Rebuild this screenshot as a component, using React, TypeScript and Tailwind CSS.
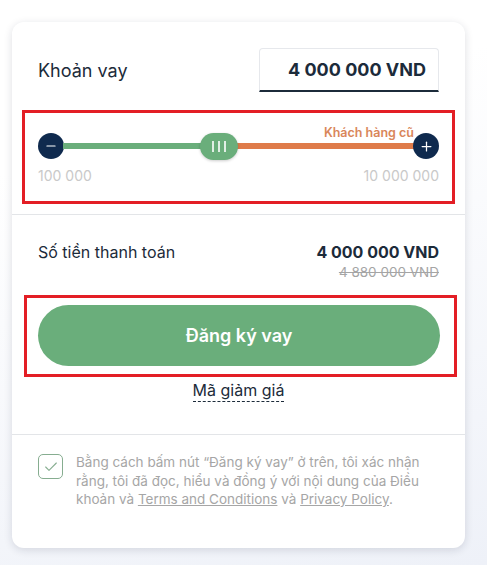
import { Check, Minus, Plus } from "lucide-react";

const font = { fontFamily: '"Inter", "Noto Sans", sans-serif' };

function Slider() {
  return (
    <div className="mx-[10px] mt-[18px] h-[94px] border-[3px] border-[#e31e25] px-[13px] pt-[20px]">
      <div className="relative flex h-[26px] items-center">
        <div className="flex h-[26px] w-[26px] shrink-0 items-center justify-center rounded-full bg-[#0f2a4e] text-white">
          <Minus size={14} strokeWidth={2} />
        </div>
        <div className="-mx-px h-[6px] flex-[0_0_140px] bg-[#6aae7b]" />
        <div className="z-10 -mx-[2px] flex h-[27px] w-[38px] shrink-0 items-center justify-center gap-[4px] rounded-full bg-[#6aae7b] shadow-[0_1px_3px_rgba(0,0,0,0.2)]">
          <span className="h-[11px] w-[2px] bg-white/80" />
          <span className="h-[11px] w-[2px] bg-white/80" />
          <span className="h-[11px] w-[2px] bg-white/80" />
        </div>
        <div className="-mx-px h-[6px] flex-1 bg-[#df7b4a]" />
        <div className="z-10 flex h-[26px] w-[26px] shrink-0 items-center justify-center rounded-full bg-[#0f2a4e] text-white">
          <Plus size={15} strokeWidth={2} />
        </div>
        <span className="absolute right-[25px] top-[-8px] text-[12.5px] font-semibold leading-[15px] text-[#d9865a]">
          Khách hàng cũ
        </span>
      </div>
      <div className="mt-[6px] flex justify-between text-[14px] text-[#c9c9c9]">
        <span>100 000</span>
        <span>10 000 000</span>
      </div>
    </div>
  );
}

export default function App() {
  return (
    <div
      className="min-h-[565px] w-full bg-[linear-gradient(165deg,#ffffff_25%,#eef1f8_100%)] pb-[17px] pt-[22px]"
      style={font}
    >
      <div className="ml-[12px] w-[453px] rounded-[12px] bg-white shadow-[0_2px_8px_rgba(20,30,60,0.14)]">
        <div className="flex items-center justify-between px-[26px] pt-[26px]">
          <span className="text-[18px] text-[#1c2b3a]">Khoản vay</span>
          <div className="flex h-[44px] w-[180px] items-center justify-end rounded-t-[4px] border border-b-2 border-[#e6e8ec] border-b-[#1c2b3a] pr-[12px] text-[18px] font-bold text-[#1c2b3a]">
            4 000 000 VND
          </div>
        </div>

        <Slider />

        <div className="mt-[10px] border-t border-[#e3e5e8]" />

        <div className="px-[26px] pt-[27px]">
          <div className="flex items-start justify-between">
            <span className="text-[16px] leading-[20px] text-[#1c2b3a]">Số tiền thanh toán</span>
            <div className="flex flex-col items-end">
              <span className="text-[16px] font-bold leading-[20px] text-[#1c2b3a]">4 000 000 VND</span>
              <span className="text-[13.5px] leading-[20px] text-[#a5a5a5] line-through">4 880 000 VND</span>
            </div>
          </div>
        </div>

        <div className="ml-[12px] mr-[8px] mt-[13px] h-[82px] border-[3px] border-[#e31e25] pl-[11px] pr-[14px] pt-[7px]">
          <button
            type="button"
            className="flex h-[61px] w-full items-center justify-center rounded-full bg-[#6aae7b] text-[18px] font-semibold text-white"
          >
            Đăng ký vay
          </button>
        </div>

        <div className="mt-[3px] flex justify-center">
          <span className="border-b border-dashed border-[#1c2b3a] pb-[1px] text-[16px] leading-[20px] text-[#1c2b3a]">
            Mã giảm giá
          </span>
        </div>

        <div className="mt-[32px] border-t border-[#e3e5e8]" />

        <div className="flex gap-[13px] px-[26px] pb-[39px] pt-[19px]">
          <div className="flex h-[25px] w-[25px] shrink-0 items-center justify-center rounded-[5px] border-[1.5px] border-[#86ad90] text-[#86ad90]">
            <Check size={16} strokeWidth={1.6} />
          </div>
          <p className="-mt-[1px] text-[13.5px] leading-[18.5px] text-[#a6a6a6]">
            Bằng cách bấm nút “Đăng ký vay” ở trên, tôi xác nhận rằng, tôi đã đọc, hiểu và đồng ý với nội dung của Điều
            khoản và <span className="underline">Terms and Conditions</span> và{" "}
            <span className="underline">Privacy Policy</span>.
          </p>
        </div>
      </div>
    </div>
  );
}
